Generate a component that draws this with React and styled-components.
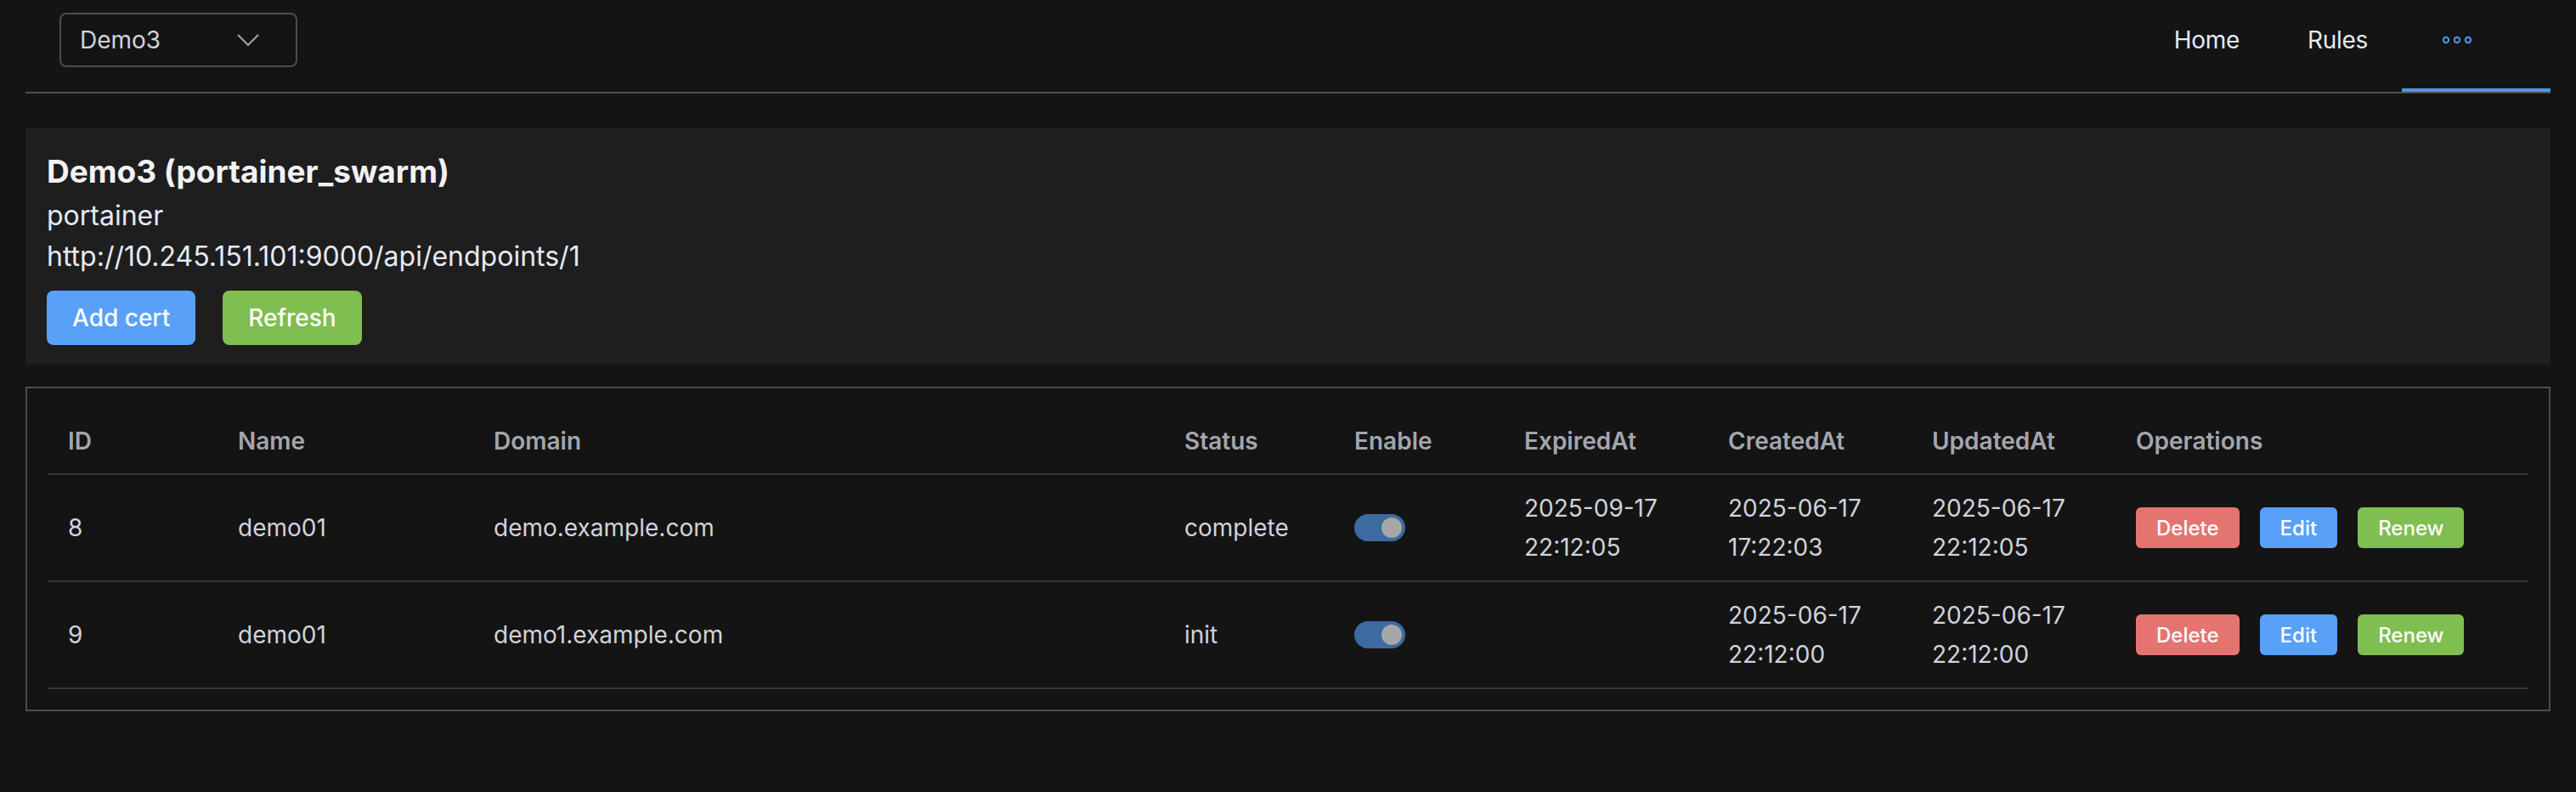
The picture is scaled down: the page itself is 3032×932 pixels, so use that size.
import React from "react";
import styled, { createGlobalStyle } from "styled-components";

const GlobalStyle = createGlobalStyle`
  html, body {
    margin: 0;
    background: #141414;
    font-family: Inter, "Noto Sans", sans-serif;
    color: #e5eaf3;
  }
  * { box-sizing: border-box; }
`;

const Page = styled.div`
  padding: 0 30px;
`;

const Header = styled.div`
  display: flex;
  justify-content: space-between;
  height: 110px;
  border-bottom: 2px solid #4c4d4f;
`;

const SelectBox = styled.div`
  margin: 15px 0 0 40px;
  width: 280px;
  height: 64px;
  border: 2px solid #4c4d4f;
  border-radius: 8px;
  display: flex;
  align-items: center;
  justify-content: space-between;
  padding: 0 43px 0 22px;
  font-size: 28px;
  color: #cfd3dc;
`;

const Nav = styled.div`
  display: flex;
`;

const NavItem = styled.div`
  display: flex;
  align-items: center;
  padding: 0 ${(p) => (p.$more ? "93px 10px 48px" : "40px 10px")};
  border-bottom: 4px solid ${(p) => (p.$active ? "#4e97ee" : "transparent")};
  font-size: 28px;
  letter-spacing: -0.3px;
  color: #e5eaf3;
`;

const Card = styled.div`
  margin-top: 40px;
  background: #1e1e1f;
  padding: 24px 24px 23px 25px;
`;

const Title = styled.div`
  font-size: 37px;
  font-weight: 700;
  line-height: 56px;
  color: #f2f2f2;
`;

const Line = styled.div`
  font-size: 32px;
  line-height: 48px;
  color: #e5eaf3;
`;

const ButtonRow = styled.div`
  display: flex;
  gap: ${(p) => p.$gap}px;
  margin-top: ${(p) => p.$top || 0}px;
`;

const colors = {
  primary: "#58a0f8",
  success: "#7fbe50",
  danger: "#e57470",
};

const Button = styled.button`
  border: none;
  border-radius: ${(p) => (p.$small ? 6 : 8)}px;
  height: ${(p) => (p.$small ? 48 : 64)}px;
  padding: 0 ${(p) => (p.$small ? 24 : 30)}px;
  background: ${(p) => colors[p.$type]};
  color: #fff;
  font-family: Inter, sans-serif;
  font-size: ${(p) => (p.$small ? 24 : 28)}px;
  font-weight: 500;
`;

const TableBox = styled.div`
  margin-top: 26px;
  border: 2px solid #4c4d4f;
  padding: 24px;
`;

const Row = styled.div`
  display: grid;
  grid-template-columns: 200px 301px 1fr 200px 200px 240px 240px 240px 486px;
  height: ${(p) => (p.$head ? 78 : 126)}px;
  border-bottom: 2px solid #363637;
`;

const Cell = styled.div`
  display: flex;
  flex-direction: column;
  justify-content: center;
  padding: 0 24px;
  font-size: 28px;
  line-height: 46px;
  font-weight: ${(p) => (p.$head ? 600 : 400)};
  color: ${(p) => (p.$head ? "#a3a6ad" : "#cfd3dc")};
`;

const Switch = styled.div`
  width: 60px;
  height: 32px;
  border-radius: 16px;
  background: #3e6aa2;
  display: flex;
  justify-content: flex-end;
  align-items: center;
  padding-right: 4px;
  &::after {
    content: "";
    width: 24px;
    height: 24px;
    border-radius: 50%;
    background: #a7a7a7;
  }
`;

const Chevron = () => (
  <svg width="26" height="14" viewBox="0 0 26 14">
    <path d="M1 1 L13 13 L25 1" fill="none" stroke="#a3a6ad" strokeWidth="2" />
  </svg>
);

const Dots = () => (
  <svg width="34" height="10" viewBox="0 0 34 10">
    {[4, 17, 30].map((cx) => (
      <circle key={cx} cx={cx} cy="5" r="3.2" fill="none" stroke="#4e97ee" strokeWidth="2" />
    ))}
  </svg>
);

const heads = ["ID", "Name", "Domain", "Status", "Enable", "ExpiredAt", "CreatedAt", "UpdatedAt", "Operations"];

const certs = [
  {
    id: 8,
    name: "demo01",
    domain: "demo.example.com",
    status: "complete",
    expired: ["2025-09-17", "22:12:05"],
    created: ["2025-06-17", "17:22:03"],
    updated: ["2025-06-17", "22:12:05"],
  },
  {
    id: 9,
    name: "demo01",
    domain: "demo1.example.com",
    status: "init",
    expired: null,
    created: ["2025-06-17", "22:12:00"],
    updated: ["2025-06-17", "22:12:00"],
  },
];

const DateCell = ({ value }) => (
  <Cell>
    {value && (
      <>
        <span>{value[0]}</span>
        <span>{value[1]}</span>
      </>
    )}
  </Cell>
);

export default function App() {
  return (
    <Page>
      <GlobalStyle />
      <Header>
        <SelectBox>
          <span>Demo3</span>
          <Chevron />
        </SelectBox>
        <Nav>
          <NavItem>Home</NavItem>
          <NavItem>Rules</NavItem>
          <NavItem $active $more>
            <Dots />
          </NavItem>
        </Nav>
      </Header>

      <Card>
        <Title>Demo3 (portainer_swarm)</Title>
        <Line>portainer</Line>
        <Line>http://10.245.151.101:9000/api/endpoints/1</Line>
        <ButtonRow $gap={32} $top={16}>
          <Button $type="primary">Add cert</Button>
          <Button $type="success">Refresh</Button>
        </ButtonRow>
      </Card>

      <TableBox>
        <Row $head>
          {heads.map((h) => (
            <Cell $head key={h}>{h}</Cell>
          ))}
        </Row>
        {certs.map((c) => (
          <Row key={c.id}>
            <Cell>{c.id}</Cell>
            <Cell>{c.name}</Cell>
            <Cell>{c.domain}</Cell>
            <Cell>{c.status}</Cell>
            <Cell>
              <Switch />
            </Cell>
            <DateCell value={c.expired} />
            <DateCell value={c.created} />
            <DateCell value={c.updated} />
            <Cell>
              <ButtonRow $gap={24}>
                <Button $small $type="danger">Delete</Button>
                <Button $small $type="primary">Edit</Button>
                <Button $small $type="success">Renew</Button>
              </ButtonRow>
            </Cell>
          </Row>
        ))}
      </TableBox>
    </Page>
  );
}
